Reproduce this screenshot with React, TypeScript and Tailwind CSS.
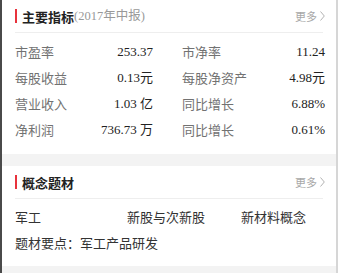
const sans = "font-['Noto_Sans_CJK_SC',sans-serif]";
const serif = "font-['Liberation_Serif','Noto_Sans_CJK_SC',serif]";

const metrics = [
  ["市盈率", "253.37", "市净率", "11.24"],
  ["每股收益", "0.13元", "每股净资产", "4.98元"],
  ["营业收入", "1.03 亿", "同比增长", "6.88%"],
  ["净利润", "736.73 万", "同比增长", "0.61%"],
];

const Header = ({ title, sub }: { title: string; sub?: string }) => (
  <div className="ml-[13px] mr-[13px] h-[33px] flex items-center justify-between border-b border-[#eeeeee]">
    <div className="flex items-center">
      <span className="w-[2px] h-[14px] bg-[#e8323c] mr-[5px]" />
      <span className="text-[13px] font-bold text-[#222] leading-none">{title}</span>
      {sub && <span className={`${serif} text-[12.5px] text-[#999] leading-none`}>{sub}</span>}
    </div>
    <span className="-mr-[2px] text-[11px] text-[#a8a8a8] leading-none flex items-center gap-[3px]">
      更多
      <svg width="5" height="10" viewBox="0 0 5 10" fill="none" stroke="#aaa" strokeWidth="0.9">
        <path d="M0.5 0.5 L4.3 5 L0.5 9.5" />
      </svg>
    </span>
  </div>
);

export default function App() {
  return (
    <div className={`${sans} w-[340px] h-[273px] bg-white overflow-hidden`}>
      <div className="w-[338px] h-full border-l-2 border-[#4a4a4a] border-r-2 border-r-[#d6d6d6] flex flex-col">
        <section className="bg-white">
          <Header title="主要指标" sub="(2017年中报)" />
          <div className="pt-[6px] pb-[11px] pl-[13px] pr-[11px]">
            {metrics.map((r, i) => (
              <div key={i} className="grid grid-cols-[138px_1fr] gap-x-[29px] h-[26px] items-center">
                <div className="flex justify-between items-center">
                  <span className="text-[13px] text-[#727272]">{r[0]}</span>
                  <span className={`${serif} text-[13px] text-[#222]`}>{r[1]}</span>
                </div>
                <div className="flex justify-between items-center">
                  <span className="text-[13px] text-[#727272]">{r[2]}</span>
                  <span className={`${serif} text-[13px] text-[#222]`}>{r[3]}</span>
                </div>
              </div>
            ))}
          </div>
        </section>
        <div className="h-[12px] bg-[#f3f3f3]" />
        <section className="bg-white">
          <Header title="概念题材" />
          <div className="pt-[5px] pb-[11px] px-[13px] text-[13px] text-[#333]">
            <div className="grid grid-cols-[112px_114px_1fr] h-[26px] items-center">
              <span>军工</span>
              <span>新股与次新股</span>
              <span>新材料概念</span>
            </div>
            <div className="h-[25px] flex items-center">题材要点：军工产品研发</div>
          </div>
        </section>
        <div className="flex-1 bg-[#f3f3f3]" />
      </div>
    </div>
  );
}
